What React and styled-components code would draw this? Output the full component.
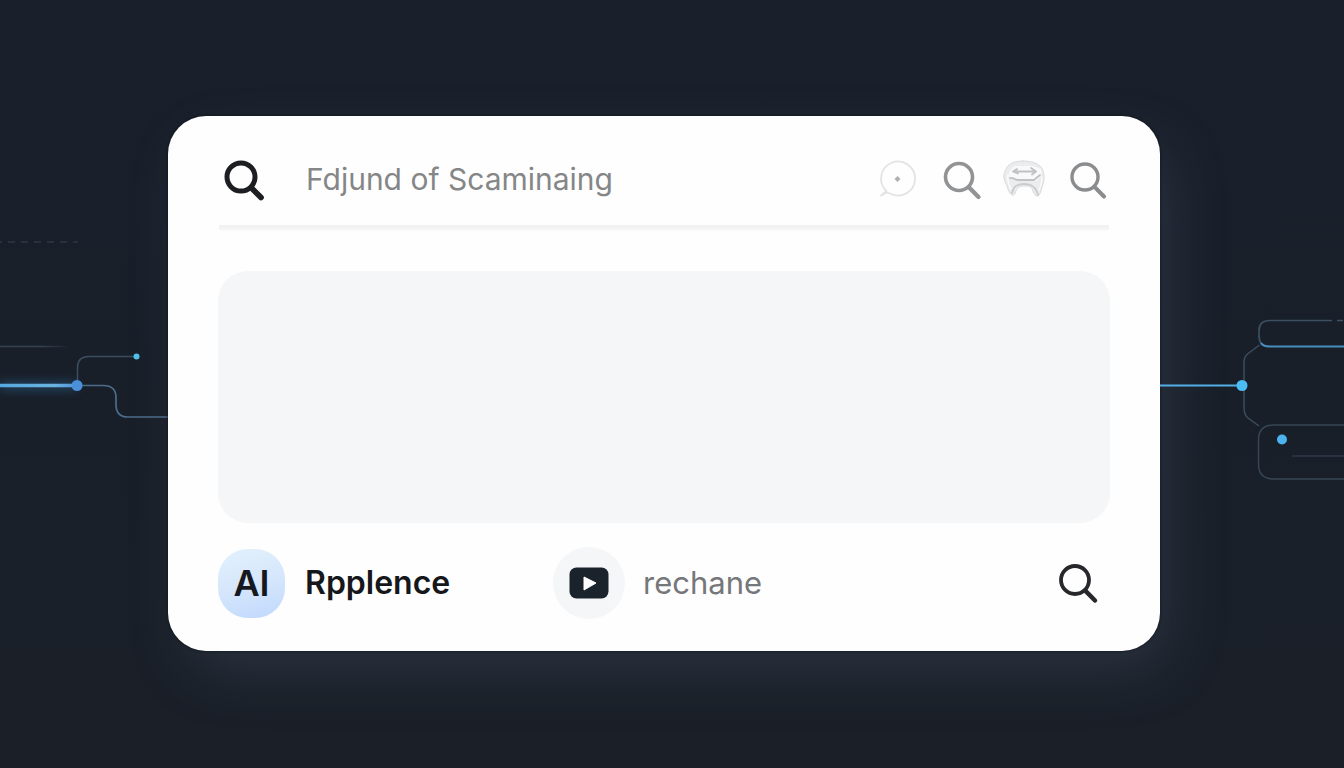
import React from 'react'
import styled, { createGlobalStyle } from 'styled-components'

const GlobalStyle = createGlobalStyle`
  * {
    box-sizing: border-box;
  }
  body {
    margin: 0;
    background: #1a1f29;
    font-family: Inter, "Liberation Sans", sans-serif;
  }
`

const Page = styled.main`
  display: grid;
  grid-template-columns: 168px minmax(0, 1fr) 184px;
  align-items: start;
  min-height: 100vh;
  padding: 116px 0;
  overflow: hidden;
  background: linear-gradient(180deg, #1a202b 0%, #191f29 50%, #1a1f28 100%);
`

const Circuit = styled.svg`
  display: block;
  width: 100%;
  height: 535px;
  fill: none;
`

const Card = styled.section`
  padding: 40px 50px 32px;
  border-radius: 38px;
  background: #fefefe;
  box-shadow: 0 0 3px #0c1118, 14px 24px 60px -8px rgba(96, 116, 136, 0.27);
`

const SearchBar = styled.form`
  display: flex;
  align-items: center;
  height: 48px;
  margin-bottom: 21px;
  padding: 0 2px;
`

const SearchInput = styled.input`
  flex: 1;
  min-width: 0;
  height: 48px;
  margin-left: 38px;
  padding: 0 0 2px;
  border: 0;
  outline: 0;
  background: transparent;
  color: #858687;
  font-family: inherit;
  font-size: 30px;

  &::placeholder {
    color: #858687;
    opacity: 1;
  }
`

const Actions = styled.div`
  display: flex;
  gap: 23px;
`

const IconButton = styled.button`
  flex: none;
  width: 48px;
  height: 40px;
  padding: 0 4px;
  border: 0;
  background: transparent;
  color: ${props => props.$color || '#1c1e22'};
  cursor: pointer;

  ${Actions} & {
    width: 40px;
    padding: 0;
  }

  svg {
    display: block;
    overflow: visible;
  }
`

const Divider = styled.hr`
  height: 6px;
  margin: 0 1px 40px;
  border: 0;
  background: linear-gradient(180deg, #f0f0f1, #f3f3f4 50%, #fbfbfb);
`

const Preview = styled.div`
  height: 252px;
  border-radius: 30px;
  background: #f5f6f8;
`

const Footer = styled.footer`
  display: flex;
  align-items: center;
  height: 72px;
  margin-top: 24px;
  padding-right: 8px;
`

const Source = styled.div`
  display: flex;
  align-items: center;
  gap: ${props => props.$gap}px;
  width: ${props => props.$width || 'auto'};
`

const AiBadge = styled.span`
  display: grid;
  place-items: center;
  width: 67px;
  height: 69px;
  border-radius: 30px;
  background: linear-gradient(165deg, #e2f1fc 0%, #d6e7fc 50%, #c0d8fd 100%);
  color: #15191f;
  font-size: 36px;
  font-weight: 600;
`

const VideoBadge = styled.span`
  display: grid;
  place-items: center;
  width: 72px;
  height: 72px;
  border-radius: 50%;
  background: #f4f6f8;
`

const Label = styled.span`
  padding-bottom: 2px;
  color: ${props => (props.$strong ? '#15171b' : '#75777a')};
  font-size: ${props => (props.$strong ? 32 : 31)}px;
  font-weight: ${props => (props.$strong ? 600 : 400)};
`

const Spacer = styled.div`
  flex: 1;
`

const SearchIcon = ({ r = 14, stroke = 4 }) => (
  <svg width="40" height="40" viewBox="0 0 40 40" fill="none" stroke="currentColor" strokeWidth={stroke}>
    <circle cx="17" cy="17" r={r} />
    <path d={`M${17 + r * 0.75} ${17 + r * 0.78}L${r + 23} ${r + 23.5}`} strokeWidth={stroke + 0.7} strokeLinecap="round" />
  </svg>
)

const BubbleIcon = () => (
  <svg width="40" height="40" viewBox="0 0 40 40" fill="none" stroke="#e2e3e4" strokeWidth="1.8">
    <path d="M2 35.500l5.500-4.500A17 17 0 1 1 11 33.500l-3.500-1L2 35.500" strokeLinecap="round" strokeLinejoin="round" />
    <path d="M18.500 16l3 3-3 3-3-3z" fill="#aeb0b2" stroke="none" />
  </svg>
)

const MaskIcon = () => (
  <svg width="40" height="40" viewBox="0 0 40 40" fill="none" strokeLinecap="round" strokeLinejoin="round">
    <path
      d="M18 1C9 1 3 4 0.500 10C-3 17 0 22 2 26c1 4 2 7 5 9 2 1 3-1 4-4 1-4 4-5 9-5s7 1 8 5c1 3 2 5 5 5 2-1 3-5 4-9 2-5 3-11 1-16C36 4 28 1 18 1z"
      fill="#ebeced"
      stroke="#d9dbdc"
    />
    <path d="M4 12l5-6h19l8 3 1 5-5 7H12l-8-4z" fill="#f9f9fa" />
    <path d="M9 11.500h21M12 9l-4 2.500 5 2M26 8l5 3.500-4 3" stroke="#bfc2c4" strokeWidth="1.800" />
    <path d="M5 18c3-1 5 2 8 2h16l6-5" stroke="#c0c3c5" strokeWidth="1.800" />
    <path d="M7 33c1-6 4-9 12-9s12 3 14 11" stroke="#c9cccd" strokeWidth="1.800" />
    <path d="M3 15c-1 5 0 9 3 14M37 17c0 5-1 9-3 13" stroke="#fafafa" strokeWidth="1.500" />
  </svg>
)

const PlayIcon = () => (
  <svg width="40" height="32" viewBox="0 0 40 32">
    <rect width="39" height="31" x="0.500" y="0.500" rx="7" fill="#1a222c" />
    <path d="M15 10l12 6-12 7z" fill="#fff" stroke="#fff" strokeLinejoin="round" />
  </svg>
)

const LeftCircuit = () => (
  <Circuit viewBox="0 0 168 535" preserveAspectRatio="xMaxYMin meet" aria-hidden="true">
    <defs>
      <linearGradient id="wire" gradientUnits="userSpaceOnUse" x1="0" x2="78" y1="0" y2="0">
        <stop offset="0" stopColor="#55a9df" />
        <stop offset="0.700" stopColor="#6bb3e0" />
        <stop offset="1" stopColor="#4e94d8" />
      </linearGradient>
      <linearGradient id="fade" gradientUnits="userSpaceOnUse" x1="0" x2="70" y1="0" y2="0">
        <stop offset="0.600" stopColor="#34434f" />
        <stop offset="1" stopColor="#34434f" stopOpacity="0" />
      </linearGradient>
      <filter id="leftGlow" filterUnits="userSpaceOnUse" x="-20" y="240" width="140" height="60">
        <feGaussianBlur stdDeviation="5" />
      </filter>
    </defs>
    <path d="M-5 126H78" stroke="#2e3743" strokeDasharray="7 6" strokeWidth="1.500" />
    <path d="M0 230.500h62q5 0 8 3" stroke="url(#fade)" strokeWidth="1.500" />
    <path d="M77.500 269v-17q0-11.500 11.500-11.500h47" stroke="#3a4e5f" strokeWidth="1.500" />
    <path d="M77 269.500h26q13 0 13 12v7q0 12.500 12 12.500h40" stroke="#4b6c8b" strokeWidth="1.700" />
    <path d="M0 270h77" stroke="#2c6c9e" strokeWidth="8" opacity="0.500" filter="url(#leftGlow)" />
    <path d="M0 269.500h77" stroke="url(#wire)" strokeWidth="3.500" />
    <circle cx="77" cy="269.500" r="5.500" fill="#4a90d9" />
    <circle cx="136.500" cy="240.500" r="3" fill="#4fc1ea" />
  </Circuit>
)

const RightCircuit = () => (
  <Circuit viewBox="0 0 184 535" preserveAspectRatio="xMinYMin meet" aria-hidden="true">
    <path d="M183 204.500h-6M172 204.500h-62q-11 0-11 10v5q0 11 10 11" stroke="#3b5063" strokeWidth="1.700" />
    <path d="M101 227q2 3.500 9 3.500h74" stroke="#468dbd" strokeWidth="2" />
    <path d="M99.500 229l-12 9q-3.500 3-3.500 8v45q0 8 4 11l11 8" stroke="#3b4d5d" strokeWidth="1.500" />
    <path d="M184 309h-70q-15.500 0-15.500 15v24q0 15 15.500 15h70" stroke="#364656" strokeWidth="1.500" />
    <path d="M132 340h52" stroke="#2c3947" strokeWidth="1.500" />
    <path d="M0 269.500h82" stroke="#52aee4" strokeWidth="2.200" />
    <circle cx="82" cy="269.500" r="5.500" fill="#4cbcf5" />
    <circle cx="122" cy="323.500" r="5" fill="#4cb3ee" />
  </Circuit>
)

const App = () => (
  <>
    <GlobalStyle />
    <Page>
      <LeftCircuit />
      <Card>
        <SearchBar onSubmit={e => e.preventDefault()}>
          <IconButton type="submit" aria-label="Search">
            <SearchIcon r={14} stroke={5} />
          </IconButton>
          <SearchInput type="text" aria-label="Search text" placeholder="Fdjund of Scaminaing" />
          <Actions>
            <IconButton type="button" aria-label="Chat">
              <BubbleIcon />
            </IconButton>
            <IconButton type="button" aria-label="Find" $color="#929395">
              <SearchIcon r={13.5} stroke={3.6} />
            </IconButton>
            <IconButton type="button" aria-label="Mask">
              <MaskIcon />
            </IconButton>
            <IconButton type="button" aria-label="Find more" $color="#8b8c8e">
              <SearchIcon r={13} stroke={3.4} />
            </IconButton>
          </Actions>
        </SearchBar>
        <Divider />
        <Preview />
        <Footer>
          <Source $gap={20} $width="335px">
            <AiBadge>AI</AiBadge>
            <Label $strong>Rpplence</Label>
          </Source>
          <Source $gap={18}>
            <VideoBadge>
              <PlayIcon />
            </VideoBadge>
            <Label>rechane</Label>
          </Source>
          <Spacer />
          <IconButton type="button" aria-label="Search sources" $color="#26282c">
            <SearchIcon r={14} stroke={3.8} />
          </IconButton>
        </Footer>
      </Card>
      <RightCircuit />
    </Page>
  </>
)

export default App
